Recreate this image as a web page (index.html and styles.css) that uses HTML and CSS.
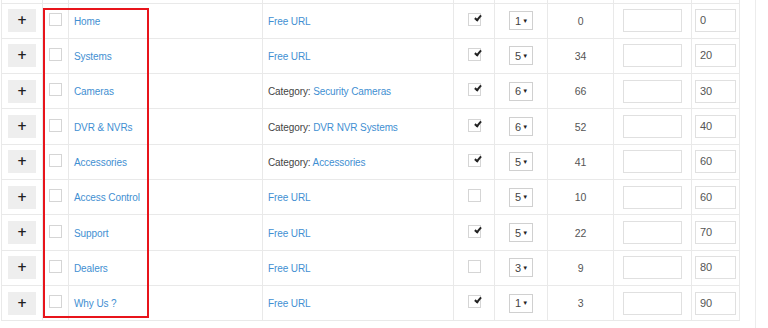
FILE: index.html
```html
<!DOCTYPE html>
<html lang="en">
  <head>
    <meta charset="utf-8" />
    <title>Menu items</title>
    <link rel="stylesheet" href="styles.css">
  </head>
  <body>
    <div class="panel">
      <table class="menu-table">
        <colgroup>
          <col class="c-add" /><col class="c-sel" /><col class="c-name" />
          <col class="c-url" /><col class="c-show" /><col class="c-level" />
          <col class="c-count" /><col class="c-extra" /><col class="c-order" />
        </colgroup>
        <tbody>
          <tr class="cut-row">
            <td></td><td></td><td></td><td></td><td></td><td></td><td></td><td></td><td></td>
          </tr>
          <tr>
            <td class="center"><button class="add">+</button></td>
            <td class="center"><span class="box"></span></td>
            <td><a href="#">Home</a></td>
            <td><a href="#">Free URL</a></td>
            <td class="center"><span class="box checked"></span></td>
            <td class="center"><span class="level">1<i>&#9660;</i></span></td>
            <td class="center num">0</td>
            <td class="center"><span class="field wide"></span></td>
            <td class="center"><span class="field">0</span></td>
          </tr>
          <tr>
            <td class="center"><button class="add">+</button></td>
            <td class="center"><span class="box"></span></td>
            <td><a href="#">Systems</a></td>
            <td><a href="#">Free URL</a></td>
            <td class="center"><span class="box checked"></span></td>
            <td class="center"><span class="level">5<i>&#9660;</i></span></td>
            <td class="center num">34</td>
            <td class="center"><span class="field wide"></span></td>
            <td class="center"><span class="field">20</span></td>
          </tr>
          <tr>
            <td class="center"><button class="add">+</button></td>
            <td class="center"><span class="box"></span></td>
            <td><a href="#">Cameras</a></td>
            <td class="cat">Category: <a href="#">Security Cameras</a></td>
            <td class="center"><span class="box checked"></span></td>
            <td class="center"><span class="level">6<i>&#9660;</i></span></td>
            <td class="center num">66</td>
            <td class="center"><span class="field wide"></span></td>
            <td class="center"><span class="field">30</span></td>
          </tr>
          <tr>
            <td class="center"><button class="add">+</button></td>
            <td class="center"><span class="box"></span></td>
            <td><a href="#">DVR &amp; NVRs</a></td>
            <td class="cat">Category: <a href="#">DVR NVR Systems</a></td>
            <td class="center"><span class="box checked"></span></td>
            <td class="center"><span class="level">6<i>&#9660;</i></span></td>
            <td class="center num">52</td>
            <td class="center"><span class="field wide"></span></td>
            <td class="center"><span class="field">40</span></td>
          </tr>
          <tr>
            <td class="center"><button class="add">+</button></td>
            <td class="center"><span class="box"></span></td>
            <td><a href="#">Accessories</a></td>
            <td class="cat">Category: <a href="#">Accessories</a></td>
            <td class="center"><span class="box checked"></span></td>
            <td class="center"><span class="level">5<i>&#9660;</i></span></td>
            <td class="center num">41</td>
            <td class="center"><span class="field wide"></span></td>
            <td class="center"><span class="field">60</span></td>
          </tr>
          <tr>
            <td class="center"><button class="add">+</button></td>
            <td class="center"><span class="box"></span></td>
            <td><a href="#">Access Control</a></td>
            <td><a href="#">Free URL</a></td>
            <td class="center"><span class="box"></span></td>
            <td class="center"><span class="level">5<i>&#9660;</i></span></td>
            <td class="center num">10</td>
            <td class="center"><span class="field wide"></span></td>
            <td class="center"><span class="field">60</span></td>
          </tr>
          <tr>
            <td class="center"><button class="add">+</button></td>
            <td class="center"><span class="box"></span></td>
            <td><a href="#">Support</a></td>
            <td><a href="#">Free URL</a></td>
            <td class="center"><span class="box checked"></span></td>
            <td class="center"><span class="level">5<i>&#9660;</i></span></td>
            <td class="center num">22</td>
            <td class="center"><span class="field wide"></span></td>
            <td class="center"><span class="field">70</span></td>
          </tr>
          <tr>
            <td class="center"><button class="add">+</button></td>
            <td class="center"><span class="box"></span></td>
            <td><a href="#">Dealers</a></td>
            <td><a href="#">Free URL</a></td>
            <td class="center"><span class="box"></span></td>
            <td class="center"><span class="level">3<i>&#9660;</i></span></td>
            <td class="center num">9</td>
            <td class="center"><span class="field wide"></span></td>
            <td class="center"><span class="field">80</span></td>
          </tr>
          <tr>
            <td class="center"><button class="add">+</button></td>
            <td class="center"><span class="box"></span></td>
            <td><a href="#">Why Us ?</a></td>
            <td><a href="#">Free URL</a></td>
            <td class="center"><span class="box checked"></span></td>
            <td class="center"><span class="level">1<i>&#9660;</i></span></td>
            <td class="center num">3</td>
            <td class="center"><span class="field wide"></span></td>
            <td class="center"><span class="field">90</span></td>
          </tr>
        </tbody>
      </table>
      <div class="highlight"></div>
    </div>
  </body>
</html>
```

FILE: styles.css
```css
html,
body {
  margin: 0;
  padding: 0;
  background: #fff;
}

body {
  font-family: "Liberation Sans", Arial, sans-serif;
  font-size: 10px;
  letter-spacing: -0.1px;
  color: #555;
}

.panel {
  position: relative;
  width: 755px;
  height: 328px;
  border-right: 1px solid #ececec;
  overflow: hidden;
}

.menu-table {
  border-collapse: collapse;
  table-layout: fixed;
  width: 739px;
  margin-left: 1px;
}

.c-add { width: 41px; }
.c-sel { width: 26px; }
.c-name { width: 194px; }
.c-url { width: 191px; }
.c-show { width: 41px; }
.c-level { width: 53px; }
.c-count { width: 66px; }
.c-extra { width: 78px; }
.c-order { width: 48px; }

.menu-table td {
  border: 1px solid #e9e9e9;
  height: 35.34px;
  padding: 1px 5px 0;
  box-sizing: border-box;
  white-space: nowrap;
  overflow: hidden;
}

.menu-table .cut-row td {
  height: 3px;
  padding: 0;
  border-top: 0;
}

.menu-table td.center {
  text-align: center;
  padding: 0;
}

.menu-table a {
  color: #3f8fd2;
  text-decoration: none;
}

.cat {
  color: #444;
}

.num {
  color: #555;
  font-size: 10.5px;
}

.add {
  width: 28px;
  height: 23px;
  border: 0;
  padding: 0;
  background: #eee;
  color: #222;
  font: bold 12px/23px "DejaVu Sans", sans-serif;
  vertical-align: middle;
}

.box {
  position: relative;
  display: inline-block;
  width: 13px;
  height: 13px;
  border: 1px solid #d5d5d5;
  box-sizing: border-box;
  vertical-align: middle;
  margin-bottom: 3px;
}

.box.checked::after {
  content: "";
  position: absolute;
  left: 7px;
  top: 0;
  width: 2px;
  height: 5px;
  border: solid #222;
  border-width: 0 2px 2px 0;
  transform: rotate(40deg);
}

.level {
  display: inline-flex;
  align-items: center;
  justify-content: space-between;
  width: 24px;
  height: 19px;
  padding: 0 4px 0 5px;
  border: 1px solid #d0d0d0;
  box-sizing: border-box;
  color: #444;
  font-size: 11px;
  vertical-align: middle;
}

.level i {
  font-style: normal;
  font-size: 6px;
  color: #222;
}

.field {
  display: inline-block;
  width: 41px;
  height: 23px;
  border: 1px solid #e0e0e0;
  box-sizing: border-box;
  padding-left: 4px;
  text-align: left;
  line-height: 21px;
  font-size: 11px;
  color: #555;
  vertical-align: middle;
}

.field.wide {
  width: 59px;
}

.highlight {
  position: absolute;
  left: 43px;
  top: 8px;
  width: 106px;
  height: 310px;
  border: 2px solid #e8141b;
  box-sizing: border-box;
}
```
